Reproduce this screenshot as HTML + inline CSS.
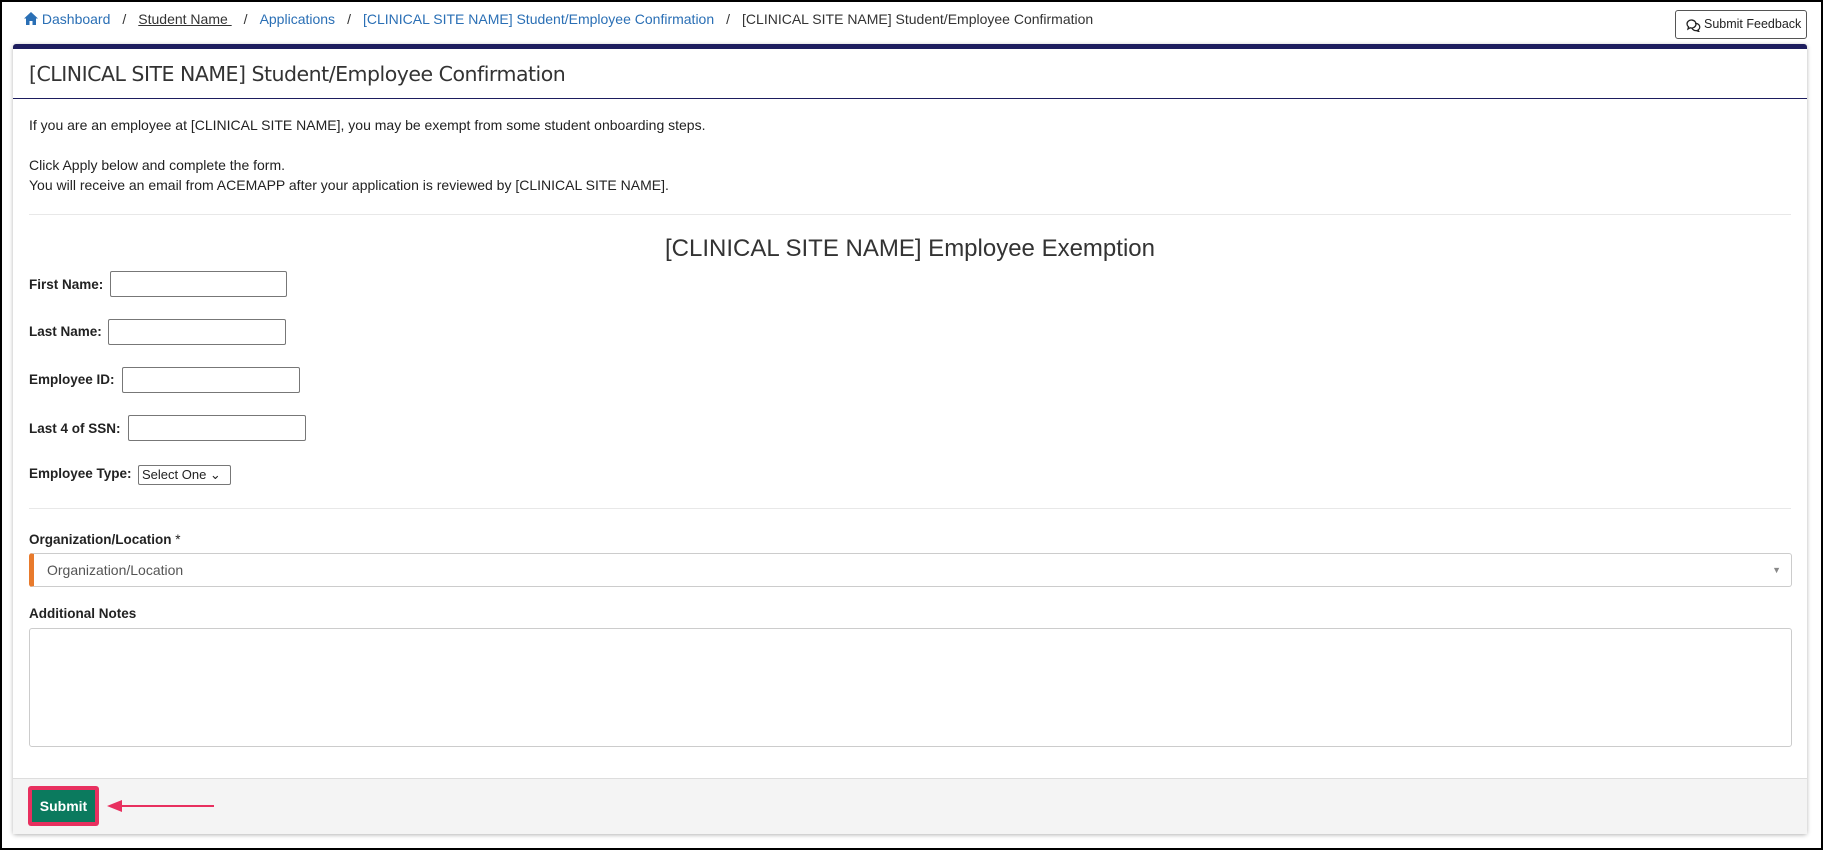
<!DOCTYPE html>
<html><head><style>
*{box-sizing:border-box}
body{margin:0;width:1823px;height:850px;background:#fff;font-family:"Liberation Sans",Arial,sans-serif;font-size:14px;color:#222;position:relative;overflow:hidden}
.frame{position:absolute;left:0;top:0;width:1823px;height:850px;border:2px solid #000}
.bc{position:absolute;left:24px;top:11px;font-size:14px;color:#333}
.bc a{color:#2a6fb5;text-decoration:none}
.bc .sep{margin:0 12px;color:#333}
.fb{position:absolute;left:1675px;top:10px;width:132px;height:29px;border:1px solid #555;border-radius:3px;font-size:12.5px;line-height:27px;padding-left:28px;background:#fff}
.card{position:absolute;left:13px;top:44px;width:1794px;height:790px;border-top:5px solid #1d1d5e;box-shadow:0 1px 4px rgba(0,0,0,.3);background:#fff;border-radius:3px}
.title{position:absolute;left:16px;top:13px;font-size:20.5px;font-family:"DejaVu Sans",sans-serif;color:#333;letter-spacing:-0.5px}
.hsep{position:absolute;left:0;right:0;top:49px;border-top:1px solid #1d1d5e}
.abs{position:absolute}
.lbl{font-weight:bold;font-size:13.5px}
.inp{position:absolute;height:26px;border:1px solid #777;border-radius:2px;background:#fff}
hr.l{position:absolute;left:16px;width:1762px;border:0;border-top:1px solid #e8e8e8;margin:0}
.foot{position:absolute;left:0;right:0;bottom:0;height:56px;background:#f4f4f4;border-top:1px solid #ddd}
</style></head><body>
<div class="frame"></div>
<div class="bc"><svg width="14" height="13" viewBox="0 0 14 13" style="vertical-align:-1px"><path d="M7 0L0 6.5h2V13h3.5V9h3v4H12V6.5h2z" fill="#2a6fb5"/></svg> <a>Dashboard</a><span class="sep">/</span><a style="color:#333;text-decoration:underline">Student Name </a><span class="sep">/</span><a>Applications</a><span class="sep">/</span><a>[CLINICAL SITE NAME] Student/Employee Confirmation</a><span class="sep">/</span>[CLINICAL SITE NAME] Student/Employee Confirmation</div>
<div class="fb"><svg width="16" height="14" viewBox="0 0 16 14" style="position:absolute;left:10px;top:7px"><path d="M1 6a4.5 4 0 1 1 3 3.8L2 11l.5-2.2A4 4 0 0 1 1 6z M9 5.5a4 3.6 0 0 1 3 6.5l.8 1.5-2.3-.9A4 3.6 0 0 1 6 10" fill="none" stroke="#222" stroke-width="1.3"/></svg>Submit Feedback</div>
<div class="card">
<div class="title">[CLINICAL SITE NAME] Student/Employee Confirmation</div>
<div class="hsep"></div>
<div class="abs" style="left:16px;top:66px;line-height:20px">If you are an employee at [CLINICAL SITE NAME], you may be exempt from some student onboarding steps.<br><br>Click Apply below and complete the form.<br>You will receive an email from ACEMAPP after your application is reviewed by [CLINICAL SITE NAME].</div>
<hr class="l" style="top:165px">
<div class="abs" style="left:0;width:1794px;text-align:center;top:186px;font-size:24px;color:#333">[CLINICAL SITE NAME] Employee Exemption</div>
<div class="abs lbl" style="left:16px;top:228px">First Name:</div><div class="inp" style="left:97px;top:222px;width:177px"></div>
<div class="abs lbl" style="left:16px;top:275px">Last Name:</div><div class="inp" style="left:95px;top:270px;width:178px"></div>
<div class="abs lbl" style="left:16px;top:323px">Employee ID:</div><div class="inp" style="left:109px;top:318px;width:178px"></div>
<div class="abs lbl" style="left:16px;top:372px">Last 4 of SSN:</div><div class="inp" style="left:115px;top:366px;width:178px"></div>
<div class="abs lbl" style="left:16px;top:417px">Employee Type:</div><div class="inp" style="left:125px;top:416px;width:93px;height:20px;font-size:13px;padding:1px 3px;line-height:16px">Select One ⌄</div>
<hr class="l" style="top:459px">
<div class="abs lbl" style="left:16px;top:483px">Organization/Location <span style="font-weight:normal">*</span></div>
<div class="abs" style="left:16px;top:504px;width:1763px;height:34px;border:1px solid #ccc;border-left:5px solid #e87a2c;border-radius:3px;padding-left:13px;line-height:32px;color:#555">Organization/Location<span style="position:absolute;right:10px;top:0;font-size:9px;color:#888">▼</span></div>
<div class="abs lbl" style="left:16px;top:557px">Additional Notes</div>
<div class="abs" style="left:16px;top:579px;width:1763px;height:119px;border:1px solid #ccc;border-radius:3px"></div>
<div class="foot">
<div class="abs" style="left:15px;top:7px;width:71px;height:40px;background:#e8305f;border-radius:3px;padding:4px"><div style="background:#0b7a5e;height:100%;color:#fff;font-weight:bold;font-size:14px;text-align:center;line-height:32px">Submit</div></div>
<svg class="abs" style="left:94px;top:18px" width="108" height="18"><path d="M14 9H107" stroke="#e8305f" stroke-width="2"/><path d="M0 9L15 3V15z" fill="#e8305f"/></svg>
</div>
</div>
</body></html>
